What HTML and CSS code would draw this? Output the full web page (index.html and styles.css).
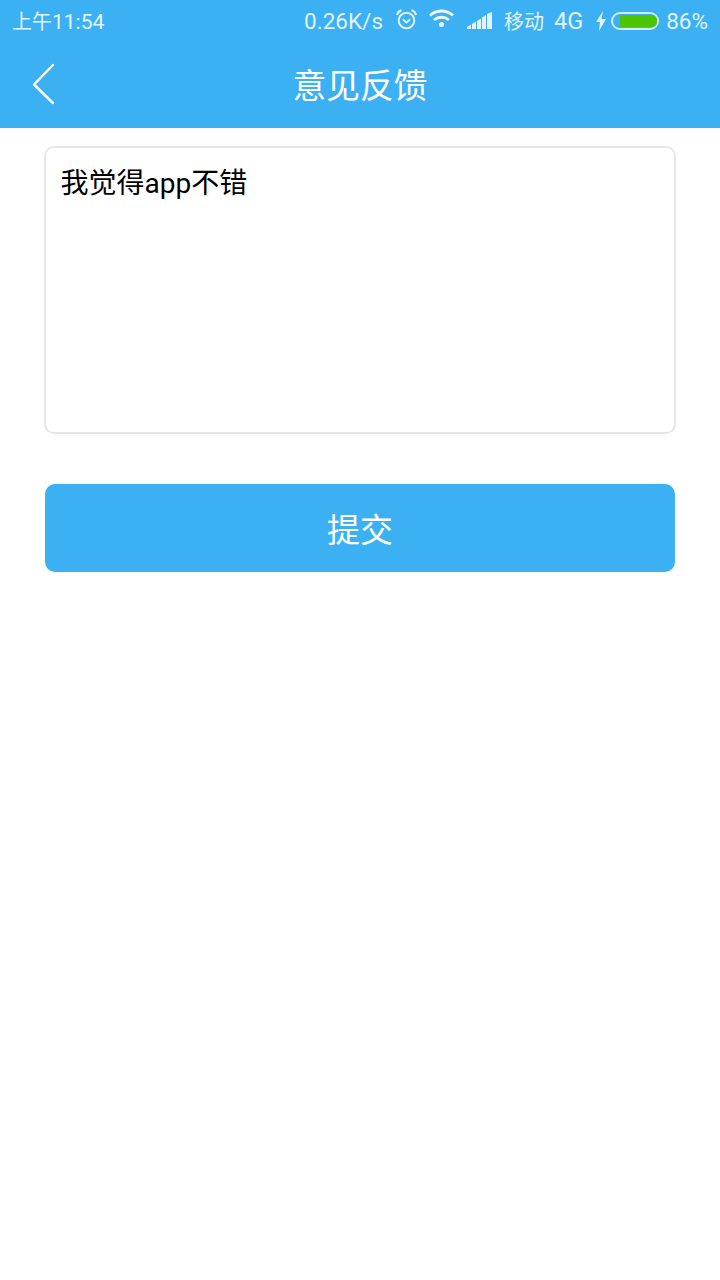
FILE: index.html
```html
<!DOCTYPE html>
<html lang="zh">
<head>
<meta charset="utf-8">
<title>意见反馈</title>
<link rel="stylesheet" href="styles.css">
</head>
<body>
<header class="header">
  <div class="status">
    <span class="time">上午<span class="time-digits">11:54</span></span>
    <div class="status-right">
      <span class="speed">0.26K/s</span>
      <svg class="ic-alarm" width="21" height="21" viewBox="0 0 21 21" fill="none" stroke="#e2f3fe" stroke-width="2"><circle cx="10.500" cy="11.500" r="7.800"/><path d="M6.800 10.300l3.700 3.200 3.700-3.200" stroke-width="1.800"/><path d="M1 6C1.500 3.500 3 2 5.500 1.200M20 6C19.500 3.500 18 2 15.500 1.200"/></svg>
      <svg class="ic-wifi" width="25" height="19" viewBox="0 0 25 19" fill="none" stroke="#f0f9fe" stroke-width="2.800"><path d="M1 6.500C7.500 .5 17.500 .5 24 6.500"/><path d="M5 11C9.500 7.300 15.500 7.300 20 11"/><circle cx="12.500" cy="15.500" r="2.500" fill="#f0f9fe" stroke="none"/></svg>
      <svg class="ic-signal" width="25" height="18" viewBox="0 0 25 18" fill="#e2f3fe"><path d="M0 15l4-2.500V17H0zM5 12l4-2.500V17H5zM10 9l4-2.500V17h-4zM15 5.500l4-2.500v14h-4zM20 2l5-2v17h-5z"/></svg>
      <span class="carrier">移动</span>
      <span class="net">4G</span>
      <svg class="ic-bolt" width="10" height="20" viewBox="0 0 10 20" fill="#e2f3fe"><path d="M7 0L0 11h4l-1 9 7-12H5.500z"/></svg>
      <div class="battery"><div class="battery-fill"></div></div>
      <span class="pct">86%</span>
    </div>
  </div>
  <div class="title-bar">
    <svg class="back" width="24" height="42" viewBox="0 0 24 42" fill="none" stroke="#fff" stroke-width="2.500" stroke-linecap="round" stroke-linejoin="round"><path d="M21 2L2 21.500 21 40"/></svg>
    <h1 class="title">意见反馈</h1>
  </div>
</header>
<main class="content">
  <div class="field">我觉得app不错</div>
  <button class="submit">提交</button>
</main>
</body>
</html>
```
FILE: styles.css
```css
* { box-sizing: border-box; }
html, body { margin: 0; padding: 0; }
body {
  width: 720px;
  height: 1280px;
  background: #fff;
  overflow: hidden;
  font-family: "Roboto", "Noto Sans CJK SC", sans-serif;
}
.header {
  height: 128px;
  background: #3bb1f3;
  display: flex;
  flex-direction: column;
}
.status {
  height: 42px;
  padding: 0 12px;
  display: flex;
  align-items: center;
  justify-content: space-between;
  color: #e2f3fe;
  font-size: 22.500px;
}
.time { font-size: 20px; margin-top: -2px; }
.time-digits { font-size: 21px; }
.status-right { display: flex; align-items: center; margin-top: -1px; }
.speed { margin-right: 13px; }
.ic-alarm { margin-right: 12px; margin-top: -3px; }
.ic-wifi { margin-right: 13px; margin-top: -4px; }
.ic-signal { margin-right: 12px; margin-top: 0; }
.carrier { font-size: 20px; margin-right: 10px; }
.net { font-size: 23.500px; margin-right: 13px; }
.ic-bolt { margin-right: 5px; margin-top: 1px; }
.battery {
  width: 48px;
  height: 18px;
  border: 2px solid #cfeafc;
  border-radius: 9px;
  padding: 1px 0 1px 7px;
  margin-right: 7px;
}
.battery-fill { height: 100%; background: #4cc500; border-radius: 1px 5px 5px 1px; }
.title-bar {
  flex: 1;
  position: relative;
  display: flex;
  align-items: center;
  justify-content: center;
  padding-bottom: 3px;
}
.back { position: absolute; left: 32px; top: 21px; }
.title {
  margin: 0;
  color: #fff;
  font-size: 33.800px;
  font-weight: 400;
}
.content {
  padding: 18px 45px 0 44px;
  display: flex;
  flex-direction: column;
}
.field {
  width: 632px;
  height: 288px;
  border: 2px solid #e6e6e6;
  border-radius: 10px;
  padding: 17px 14.500px;
  font-size: 28px;
  line-height: 38px;
  color: #000;
}
.submit {
  width: 630px;
  height: 88px;
  margin: 50px 0 0 1px;
  border: 0;
  border-radius: 10px;
  background: #3bb1f3;
  color: #fff;
  font-family: inherit;
  font-size: 33px;
}
```
